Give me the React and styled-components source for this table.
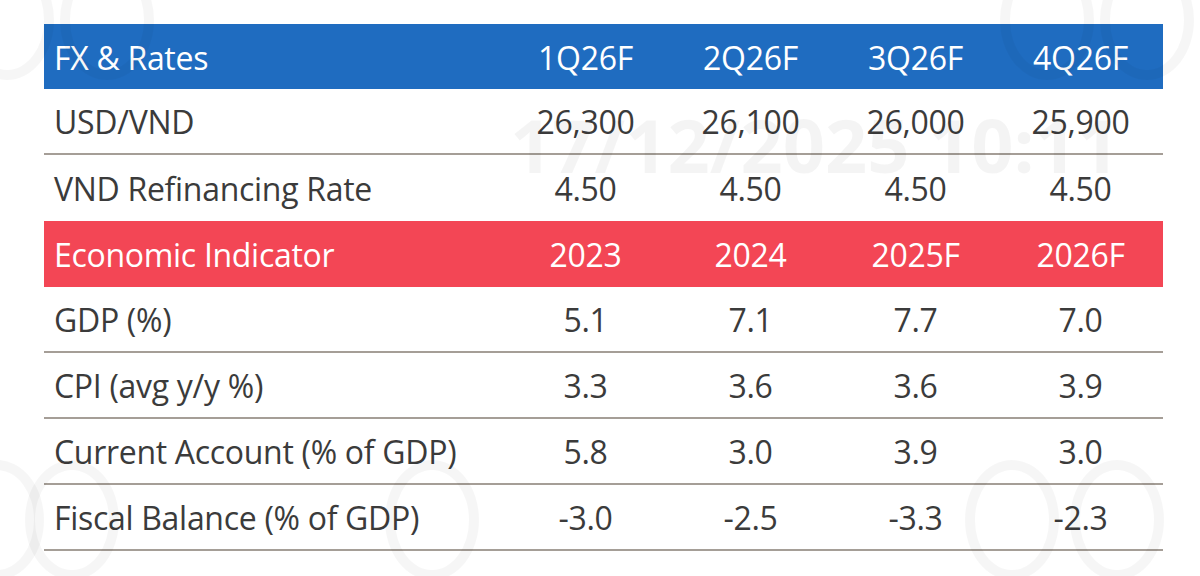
import React from 'react';
import styled, { createGlobalStyle } from 'styled-components';

const GlobalStyle = createGlobalStyle`
  html, body {
    margin: 0;
    padding: 0;
    background: #ffffff;
  }
  body {
    font-family: 'Open Sans', 'Lato', sans-serif;
    color: #3b3b3b;
  }
`;

const Page = styled.div`
  position: relative;
  width: 1200px;
  height: 576px;
  overflow: hidden;
  background: #ffffff;
  padding: 24px 37px 0 44px;
  box-sizing: border-box;
`;

// faint watermark printed over the scan, as in the source image
const Watermark = styled.div`
  position: absolute;
  inset: 0;
  pointer-events: none;
  z-index: 2;
`;

const StampText = styled.div`
  position: absolute;
  left: 510px;
  top: 94px;
  font-family: 'Open Sans', sans-serif;
  font-weight: 700;
  font-size: 74px;
  letter-spacing: 0;
  color: rgba(0, 0, 0, 0.045);
  white-space: nowrap;
`;

const Ring = styled.div`
  position: absolute;
  width: 74px;
  height: 100px;
  border: 10px solid rgba(0, 0, 0, 0.035);
  border-radius: 50%;
`;

const Table = styled.div`
  position: relative;
  z-index: 1;
  width: 1119px;
  display: grid;
  grid-template-columns: 459px repeat(4, 165px);
`;

const Row = styled.div`
  display: contents;
`;

const Cell = styled.div`
  height: ${({ $h }) => $h || 66}px;
  display: flex;
  align-items: center;
  justify-content: ${({ $label }) => ($label ? 'flex-start' : 'center')};
  padding-left: ${({ $label }) => ($label ? '10px' : '0')};
  padding-top: 1px;
  box-sizing: border-box;
  font-size: 32px;
  letter-spacing: -0.3px;
  white-space: nowrap;
  background: ${({ $bg }) => $bg || 'transparent'};
  color: ${({ $bg }) => ($bg ? '#ffffff' : '#3b3b3b')};
  border-bottom: ${({ $line }) => ($line ? '2px solid #a59e97' : 'none')};
`;

const BLUE = '#1f6cc0';
const RED = '#f34655';

const sections = [
  {
    title: 'FX & Rates',
    bg: BLUE,
    head: 65,
    cols: ['1Q26F', '2Q26F', '3Q26F', '4Q26F'],
    rows: [
      { label: 'USD/VND', values: ['26,300', '26,100', '26,000', '25,900'], line: true },
      { label: 'VND Refinancing Rate', values: ['4.50', '4.50', '4.50', '4.50'], line: false },
    ],
  },
  {
    title: 'Economic Indicator',
    bg: RED,
    head: 66,
    cols: ['2023', '2024', '2025F', '2026F'],
    rows: [
      { label: 'GDP (%)', values: ['5.1', '7.1', '7.7', '7.0'], line: true },
      { label: 'CPI (avg y/y %)', values: ['3.3', '3.6', '3.6', '3.9'], line: true },
      { label: 'Current Account (% of GDP)', values: ['5.8', '3.0', '3.9', '3.0'], line: true },
      { label: 'Fiscal Balance (% of GDP)', values: ['-3.0', '-2.5', '-3.3', '-2.3'], line: true },
    ],
  },
];

const rings = [
  { left: -40, top: -40 }, { left: 60, top: -40 },
  { left: 1000, top: -40 }, { left: 1100, top: -40 },
  { left: -50, top: 460 }, { left: 25, top: 460 },
  { left: 385, top: 460 }, { left: 965, top: 460 }, { left: 1070, top: 460 },
];

export default function App() {
  return (
    <>
      <GlobalStyle />
      <Page>
        <Watermark>
          <StampText>17/12/2025 10:11</StampText>
          {rings.map((r, i) => (
            <Ring key={i} style={{ left: r.left, top: r.top }} />
          ))}
        </Watermark>
        <Table>
          {sections.map((s) => (
            <React.Fragment key={s.title}>
              <Row>
                <Cell $label $bg={s.bg} $h={s.head}>{s.title}</Cell>
                {s.cols.map((c) => (
                  <Cell key={c} $bg={s.bg} $h={s.head}>{c}</Cell>
                ))}
              </Row>
              {s.rows.map((r) => (
                <Row key={r.label}>
                  <Cell $label $line={r.line}>{r.label}</Cell>
                  {r.values.map((v, i) => (
                    <Cell key={i} $line={r.line}>{v}</Cell>
                  ))}
                </Row>
              ))}
            </React.Fragment>
          ))}
        </Table>
      </Page>
    </>
  );
}
